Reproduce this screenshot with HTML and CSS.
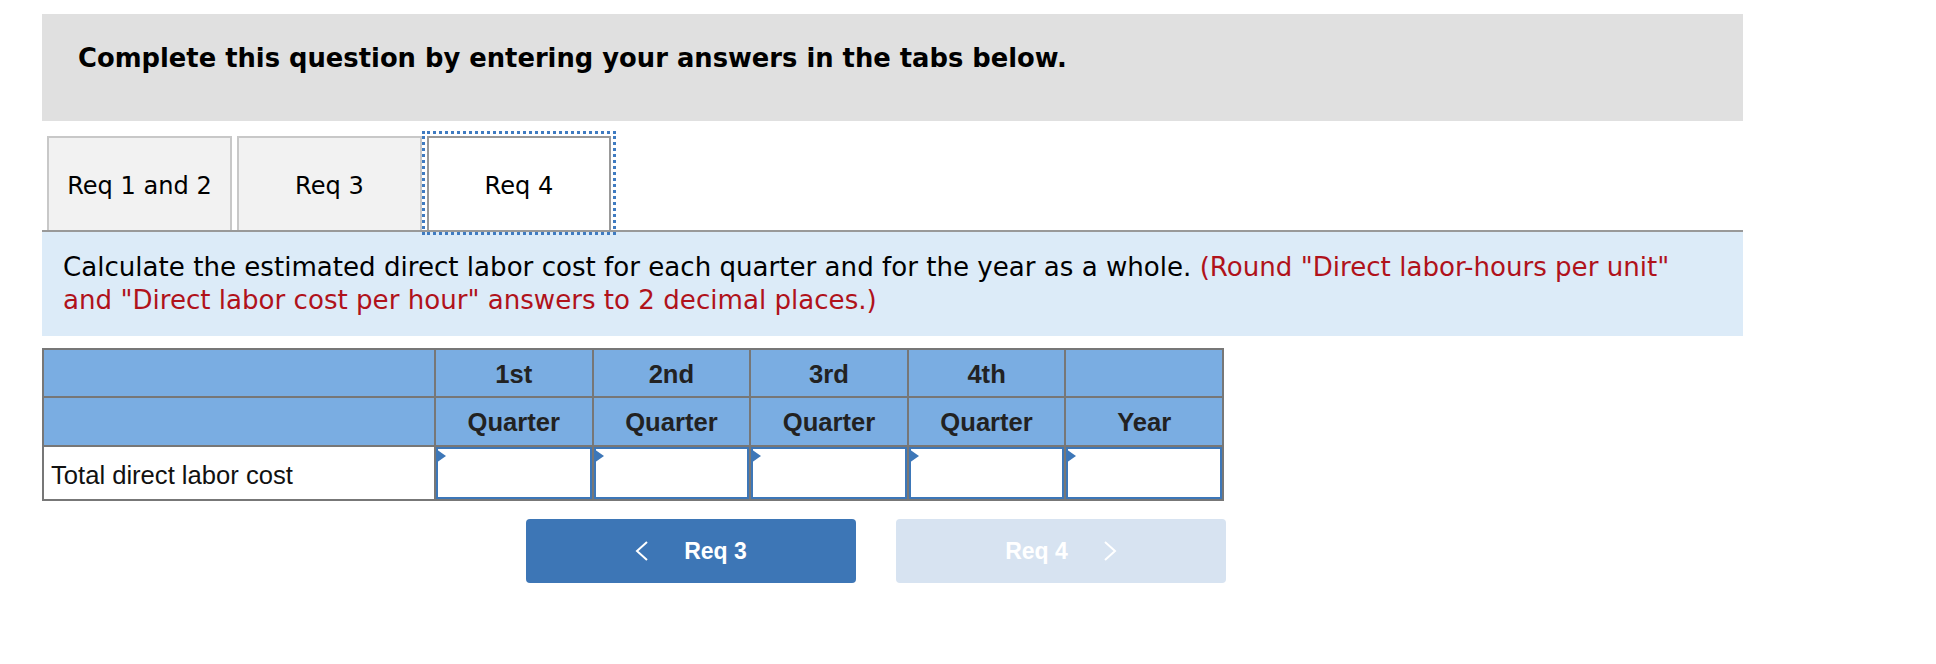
FILE: index.html
```html
<!DOCTYPE html>
<html lang="en">
<head>
	<meta charset="UTF-8">
	<title>Req 4</title>
	<link rel="stylesheet" href="styles.css">
</head>
<body>
	<div class="wrap">
		<div class="intro">Complete this question by entering your answers in the tabs below.</div>

		<ul class="tabs">
			<li>Req 1 and 2</li>
			<li>Req 3</li>
			<li class="active">Req 4</li>
		</ul>

		<div class="question">
			Calculate the estimated direct labor cost for each quarter and for the year as a whole. <span class="hint">(Round "Direct labor-hours per unit" and "Direct labor cost per hour" answers to 2 decimal places.)</span>
		</div>

		<table class="grid">
			<colgroup>
				<col class="label-col">
				<col><col><col><col><col>
			</colgroup>
			<tr class="head">
				<th></th>
				<th>1st</th>
				<th>2nd</th>
				<th>3rd</th>
				<th>4th</th>
				<th></th>
			</tr>
			<tr class="head head2">
				<th></th>
				<th>Quarter</th>
				<th>Quarter</th>
				<th>Quarter</th>
				<th>Quarter</th>
				<th>Year</th>
			</tr>
			<tr class="row">
				<td class="label">Total direct labor cost</td>
				<td class="entry"><div class="box"><input type="text"></div></td>
				<td class="entry"><div class="box"><input type="text"></div></td>
				<td class="entry"><div class="box"><input type="text"></div></td>
				<td class="entry"><div class="box"><input type="text"></div></td>
				<td class="entry"><div class="box"><input type="text"></div></td>
			</tr>
		</table>

		<div class="pager">
			<button class="btn prev">
				<svg width="14" height="20" viewBox="0 0 14 20"><polyline points="12,1 2,10 12,19" fill="none" stroke="#fff" stroke-width="2"/></svg>
				<span>Req 3</span>
			</button>
			<button class="btn next">
				<span>Req 4</span>
				<svg width="14" height="20" viewBox="0 0 14 20"><polyline points="2,1 12,10 2,19" fill="none" stroke="#fff" stroke-width="2"/></svg>
			</button>
		</div>
	</div>
</body>
</html>
```

FILE: styles.css
```css
*{
	padding: 0;
	margin: 0;
	box-sizing: border-box;
}
body{
	background: #fff;
	font-family: "DejaVu Sans", Verdana, sans-serif;
	color: #000;
}
.wrap{
	width: 1743px;
	padding: 14px 0 0 42px;
}
.intro{
	height: 107px;
	background: #e0e0e0;
	padding: 29px 0 0 36px;
	font-size: 25.8px;
	font-weight: bold;
}
.tabs{
	list-style: none;
	display: flex;
	gap: 5px;
	margin-top: 15px;
	padding-left: 5px;
	border-bottom: 2px solid #999;
}
.tabs li{
	width: 185px;
	height: 94px;
	display: flex;
	align-items: center;
	justify-content: center;
	background: #f2f2f2;
	border: 2px solid #c8c8c8;
	border-bottom: none;
	font-size: 24.1px;
	padding-top: 4px;
}
.tabs li.active{
	width: 184px;
	background: #fff;
	border: 2px solid #999;
	border-bottom: none;
	outline: 3px dotted #3f7bc1;
	outline-offset: 2px;
}
.question{
	background: #dcebf8;
	padding: 19px 20px 19px 21px;
	font-size: 26.1px;
	line-height: 33px;
}
.hint{
	color: #b0121b;
}
.grid{
	margin-top: 12px;
	width: 1182px;
	border-collapse: collapse;
	table-layout: fixed;
	font-family: "Liberation Sans", Arial, sans-serif;
	font-size: 25.6px;
	color: #222;
}
.label-col{
	width: 392px;
}
.grid th, .grid td{
	border: 2px solid #777;
}
.head th{
	background: #7aade2;
	height: 48px;
	font-weight: bold;
	text-align: center;
	padding-top: 2px;
}
.head2 th{
	height: 49px;
}
.row td{
	height: 54px;
}
.label{
	padding: 4px 0 0 7px;
	color: #111;
}
.entry{
	padding: 0;
}
.box{
	position: relative;
	height: 52px;
}
.box::before{
	content: "";
	position: absolute;
	left: 0;
	top: 2px;
	border-left: 10px solid #3d77b8;
	border-top: 7px solid transparent;
	border-bottom: 7px solid transparent;
}
.box input{
	width: 100%;
	height: 100%;
	border: 2px solid #3d77b8;
	outline: none;
	background: #fff;
}
.pager{
	display: flex;
	gap: 40px;
	margin: 18px 0 0 484px;
}
.btn{
	width: 330px;
	height: 64px;
	border: none;
	border-radius: 4px;
	display: flex;
	align-items: center;
	justify-content: center;
	gap: 35px;
	color: #fff;
	font-family: "Liberation Sans", Arial, sans-serif;
	font-size: 23px;
	font-weight: bold;
	cursor: pointer;
}
.prev{
	background: #3d76b6;
}
.next{
	background: #d7e3f1;
}
```
